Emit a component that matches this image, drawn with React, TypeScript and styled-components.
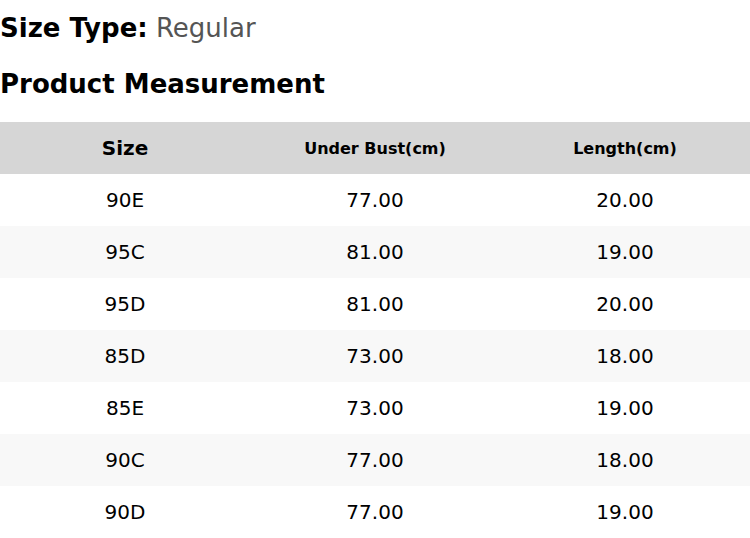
import React from "react";
import styled, { createGlobalStyle } from "styled-components";

const Global = createGlobalStyle`
  html, body { margin: 0; padding: 0; background: #fff; }
  body { font-family: "DejaVu Sans", sans-serif; color: #000; }
`;

const Page = styled.div`
  width: 750px;
`;

const SizeType = styled.div`
  font-size: 26px;
  line-height: 30px;
  padding-top: 13px;
`;

const Label = styled.span`
  font-weight: bold;
  color: #000;
`;

const Value = styled.span`
  color: #555;
`;

const Title = styled.h2`
  margin: 0;
  font-size: 26px;
  font-weight: bold;
  line-height: 30px;
  padding-top: 26px;
  padding-bottom: 23px;
`;

const Table = styled.div`
  display: grid;
  grid-template-columns: repeat(3, 1fr);
`;

const HeadCell = styled.div<{ $small?: boolean }>`
  height: 52px;
  display: flex;
  align-items: center;
  justify-content: center;
  background: #d6d6d6;
  font-weight: bold;
  font-size: ${(p) => (p.$small ? "16px" : "20px")};
`;

const Cell = styled.div<{ $alt: boolean }>`
  height: 52px;
  display: flex;
  align-items: center;
  justify-content: center;
  background: ${(p) => (p.$alt ? "#f8f8f8" : "#fff")};
  font-size: 20px;
`;

const rows = [
  ["90E", "77.00", "20.00"],
  ["95C", "81.00", "19.00"],
  ["95D", "81.00", "20.00"],
  ["85D", "73.00", "18.00"],
  ["85E", "73.00", "19.00"],
  ["90C", "77.00", "18.00"],
  ["90D", "77.00", "19.00"],
];

export default function App() {
  return (
    <Page>
      <Global />
      <SizeType>
        <Label>Size Type:</Label> <Value>Regular</Value>
      </SizeType>
      <Title>Product Measurement</Title>
      <Table>
        <HeadCell>Size</HeadCell>
        <HeadCell $small>Under Bust(cm)</HeadCell>
        <HeadCell $small>Length(cm)</HeadCell>
        {rows.map((r, i) =>
          r.map((v, j) => (
            <Cell key={`${i}-${j}`} $alt={i % 2 === 1}>
              {v}
            </Cell>
          ))
        )}
      </Table>
    </Page>
  );
}
